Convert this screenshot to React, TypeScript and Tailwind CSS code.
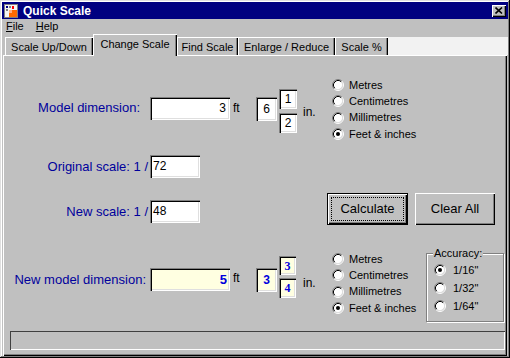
import React from "react";

const sunken =
  "shadow-[inset_1px_1px_#808080,inset_2px_2px_#000,inset_-1px_-1px_#fff,inset_-2px_-2px_#dfdfdf]";
const raised =
  "shadow-[inset_1px_1px_#fff,inset_-1px_-1px_#000,inset_-2px_-2px_#808080]";

function RadioDot({ checked }: { checked?: boolean }) {
  return (
    <svg width="12" height="12" viewBox="0 0 12 12" className="shrink-0">
      <circle cx="6" cy="6" r="4.5" fill="#fff" />
      <path d="M2.11 9.89A5.5 5.5 0 0 1 9.89 2.11" fill="none" stroke="#808080" />
      <path d="M2.82 9.18A4.5 4.5 0 0 1 9.18 2.82" fill="none" stroke="#000" />
      <path d="M9.89 2.11A5.5 5.5 0 0 1 2.11 9.89" fill="none" stroke="#fff" />
      <path d="M9.18 2.82A4.5 4.5 0 0 1 2.82 9.18" fill="none" stroke="#dfdfdf" />
      {checked && <circle cx="6" cy="6" r="2" fill="#000" />}
    </svg>
  );
}

function Radio({ label, checked, h, gap }: { label: string; checked?: boolean; h: string; gap: string }) {
  return (
    <div className={`flex items-center ${h}`}>
      <RadioDot checked={checked} />
      <span className={`${gap} text-[11px] leading-[13px] text-black whitespace-nowrap`}>{label}</span>
    </div>
  );
}

function UnitGroup() {
  return (
    <div className="w-[94px] flex flex-col">
      <Radio label="Metres" h="h-[16px]" gap="ml-[5px]" />
      <Radio label="Centimetres" h="h-[16px]" gap="ml-[5px]" />
      <Radio label="Millimetres" h="h-[17px]" gap="ml-[5px]" />
      <Radio label="Feet & inches" checked h="h-[16px]" gap="ml-[5px]" />
    </div>
  );
}

function Tab({ label, w, active }: { label: string; w: string; active?: boolean }) {
  if (active) {
    return (
      <div
        className={`${w} h-[22px] -mb-[1px] relative z-10 bg-[#c0c0c0] flex justify-center pt-[4px] text-[11px] leading-[13px] shadow-[inset_1px_1px_#fff,inset_-1px_0_#000,inset_-2px_0_#808080]`}
      >
        {label}
      </div>
    );
  }
  return (
    <div
      className={`${w} h-[18px] bg-[#c0c0c0] flex justify-center pt-[4px] text-[11px] leading-[13px] shadow-[inset_1px_1px_#fff,inset_-1px_0_#000,inset_-2px_0_#808080]`}
    >
      {label}
    </div>
  );
}

export default function App() {
  const label = "text-[13px] text-[#00009c] text-right whitespace-nowrap";
  return (
    <div className="w-[510px] h-[358px] bg-[#c0c0c0] p-[2px] flex flex-col font-['Liberation_Sans',Arial,sans-serif] text-black shadow-[inset_-1px_-1px_#000,inset_1px_1px_#dfdfdf,inset_-2px_-2px_#808080,inset_2px_2px_#fff]">
      {/* title bar */}
      <div className="h-[17px] bg-[#000080] flex items-center pl-[2px] pr-[2px]">
        <svg width="14" height="14" viewBox="0 0 14 14" className="shrink-0">
          <rect x="0.5" y="0.5" width="13" height="13" fill="#f4f4f4" stroke="#808080" />
          <rect x="2" y="2" width="2" height="2" fill="#000080" />
          <rect x="5" y="2" width="2" height="2" fill="#808080" />
          <rect x="2" y="5" width="2" height="2" fill="#808080" />
          <rect x="8" y="2" width="2" height="3" fill="#ff0000" />
          <rect x="5" y="6" width="8" height="7" fill="#ff6a00" />
          <rect x="5" y="6" width="3" height="3" fill="#ffb080" />
        </svg>
        <span className="ml-[5px] text-white font-bold text-[12px] leading-[14px]">Quick Scale</span>
        <div className={`ml-auto w-[14px] h-[12px] bg-[#c0c0c0] flex items-center justify-center ${raised}`}>
          <svg width="8" height="7" viewBox="0 0 8 7">
            <path d="M0.5 0.5L7 6.5M7 0.5L0.5 6.5" stroke="#000" strokeWidth="1.6" />
          </svg>
        </div>
      </div>

      {/* menu */}
      <div className="h-[15px] flex items-center pl-[4px] text-[11px] leading-[13px]">
        <span>
          <span className="underline">F</span>ile
        </span>
        <span className="ml-[12px]">
          <span className="underline">H</span>elp
        </span>
      </div>

      {/* tabs */}
      <div className="h-[21px] flex items-end pl-[3px]">
        <Tab label="Scale Up/Down" w="w-[88px]" />
        <Tab label="Change Scale" w="w-[84px]" active />
        <Tab label="Find Scale" w="w-[61px]" />
        <Tab label="Enlarge / Reduce" w="w-[97px]" />
        <Tab label="Scale %" w="w-[53px]" />
        <div className="flex-1 h-[18px] bg-[#f2f2f2]" />
      </div>

      {/* panel */}
      <div className="flex-1 mx-[1px] flex flex-col shadow-[inset_1px_1px_#fff,inset_-1px_-1px_#000,inset_-2px_-2px_#808080]">
        {/* model dimension */}
        <div className="mt-[22px] h-[68px] flex items-start">
          <div className={`${label} w-[137px] mt-[24px] leading-[14px]`}>Model dimension:</div>
          <div className={`ml-[10px] w-[80px] h-[23px] mt-[20px] bg-white ${sunken} text-right pr-[4px] text-[12px] leading-[23px]`}>
            3
          </div>
          <div className="w-[26px] pl-[3px] mt-[24px] text-[12px] leading-[14px]">ft</div>
          <div className={`w-[21px] h-[24px] mt-[20px] bg-white ${sunken} text-center text-[12px] leading-[24px]`}>6</div>
          <div className="ml-[2px] w-[18px] mt-[12px] flex flex-col">
            <div className={`h-[20px] bg-white ${sunken} text-center text-[12px] leading-[21px]`}>1</div>
            <div className={`mt-[4px] h-[20px] bg-white ${sunken} text-center text-[12px] leading-[21px]`}>2</div>
          </div>
          <div className="w-[35px] pl-[6px] mt-[28px] text-[12px] leading-[14px]">in.</div>
          <UnitGroup />
        </div>

        {/* original scale */}
        <div className="mt-[10px] h-[23px] flex items-center">
          <div className={`${label} w-[145px] leading-[23px]`}>Original scale: 1 /</div>
          <div className={`ml-[2px] w-[50px] h-[23px] bg-white ${sunken} pl-[3px] text-[12px] leading-[23px]`}>72</div>
        </div>

        {/* new scale + buttons */}
        <div className="mt-[15px] h-[32px] flex items-start">
          <div className={`${label} w-[145px] mt-[7px] leading-[23px]`}>New scale: 1 /</div>
          <div className={`ml-[2px] mt-[7px] w-[50px] h-[23px] bg-white ${sunken} pl-[3px] text-[12px] leading-[23px]`}>48</div>
          <button className="ml-[127px] w-[81px] h-[32px] bg-[#c0c0c0] border border-black p-[3px] shadow-[inset_1px_1px_#fff,inset_-1px_-1px_#000,inset_-2px_-2px_#808080]">
            <div className="w-full h-full border border-dotted border-black flex items-center justify-center text-[13px]">
              Calculate
            </div>
          </button>
          <button className={`ml-[7px] w-[80px] h-[32px] bg-[#c0c0c0] ${raised} flex items-center justify-center text-[13px]`}>
            Clear All
          </button>
        </div>

        {/* new model dimension */}
        <div className="mt-[26px] flex items-start">
          <div className={`${label} w-[143px] mt-[17px] leading-[23px]`}>New model dimension:</div>
          <div className={`ml-[4px] w-[80px] h-[23px] mt-[17px] bg-[#ffffe1] ${sunken} text-right pr-[3px] text-[13px] font-bold text-[#0000dd] leading-[23px]`}>
            5
          </div>
          <div className="w-[26px] pl-[3px] mt-[20px] text-[12px] leading-[14px]">ft</div>
          <div className={`w-[21px] h-[24px] mt-[17px] bg-[#ffffe1] ${sunken} text-center text-[12px] font-bold text-[#0000dd] leading-[25px]`}>
            3
          </div>
          <div className="ml-[2px] w-[17px] mt-[5px] flex flex-col">
            <div className={`h-[19px] bg-[#ffffe1] ${sunken} text-center text-[12px] font-bold text-[#0000dd] font-['Liberation_Serif',serif] leading-[20px]`}>
              3
            </div>
            <div className={`mt-[3px] h-[20px] bg-[#ffffe1] ${sunken} text-center text-[12px] font-bold text-[#0000dd] font-['Liberation_Serif',serif] leading-[21px]`}>
              4
            </div>
          </div>
          <div className="w-[36px] pl-[7px] mt-[25px] text-[12px] leading-[14px]">in.</div>
          <UnitGroup />
          <div className="relative w-[78px] h-[69px] mt-[2px] pt-[7px] pl-[7px] border border-[#808080] shadow-[inset_1px_1px_#fff,1px_1px_#fff]">
            <span className="absolute left-[6px] -top-[7px] bg-[#c0c0c0] px-[1px] text-[11px] leading-[13px]">Accuracy:</span>
            <Radio label={'1/16"'} checked h="h-[18px]" gap="ml-[7px]" />
            <Radio label={'1/32"'} h="h-[18px]" gap="ml-[7px]" />
            <Radio label={'1/64"'} h="h-[18px]" gap="ml-[7px]" />
          </div>
        </div>

        {/* status bar */}
        <div className="mt-[9px] ml-[7px] w-[495px] h-[19px] shadow-[inset_1px_1px_#404040,inset_-1px_-1px_#fff]" />
      </div>
    </div>
  );
}
